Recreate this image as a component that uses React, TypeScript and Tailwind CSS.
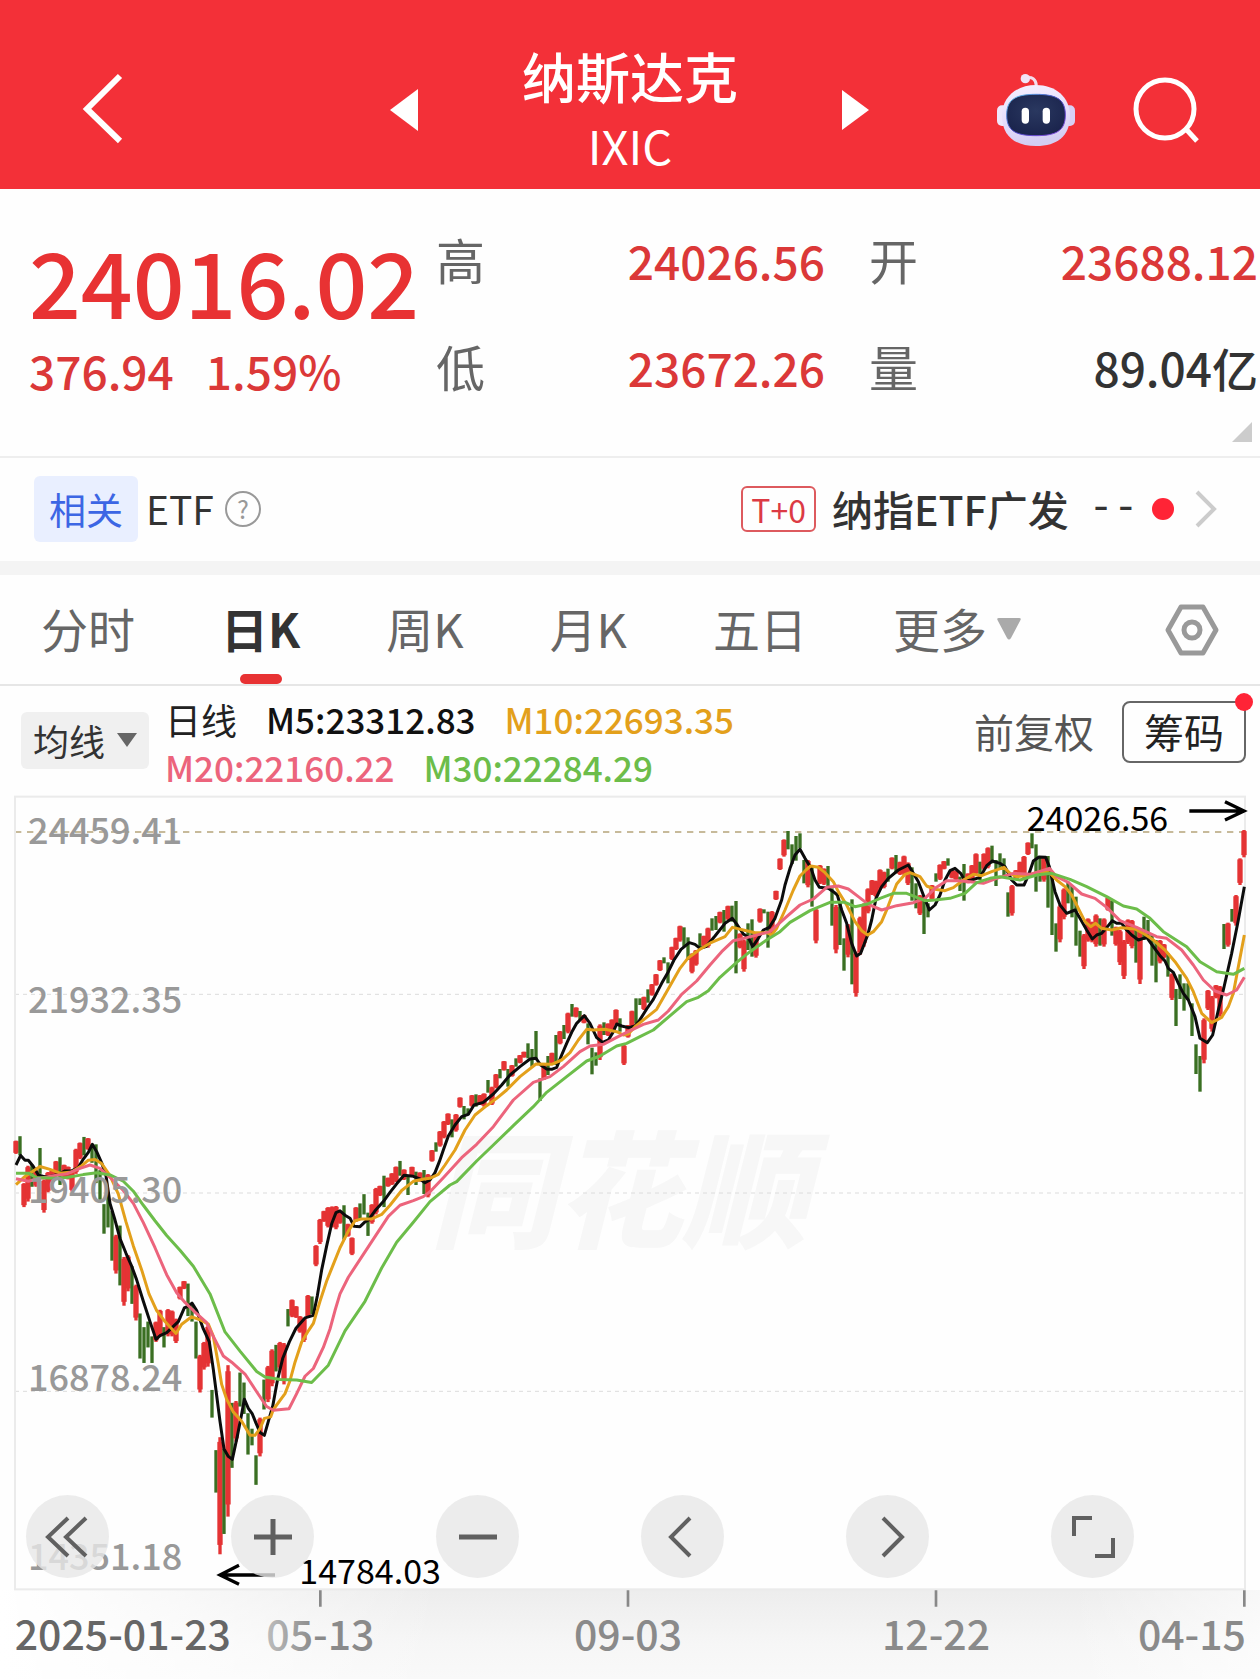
import type { ReactNode } from "react";

// Chart space: three units per CSS pixel at the base width of 1260.
const BAR_STEP = 12;
const FIRST_BAR_X = 48;

// Consecutive trading days, "r" rising or "g" falling, followed by high and low.
const SESSIONS: { y: number; scale: number; bars: string }[] = [
  {
    y: 960,
    scale: 1.108,
    bars: `r110-146 g98-150 r225-290 r178-275 g175-235 r190-235 g130-200 r215-305 r195-250 r190-225
r165-205 g155-230 r175-210 r180-215 r190-248 r132-200 r115-160 g100-150 r103-135 g120-170
g120-225 g190-270 g282-362 g250-345 g300-435 r365-470 g340-502 r425-557 r420-518 g450-552
r500-597 g578-700 g615-712 g600-670 g640-712 r600-655 r568-640 g615-670 r566-640 r570-640
r592-658 r505-540 r490-512 g497-585 g555-600 g600-700 r690-792 r655-730 r610-722 g785-860
g948-1063 r913-1230 g945-1175 r718-1128 g820-996 r815-925 g738-830 g765-850 g848-960 g890-935
g962-1042 r860-965 g757-838 r720-818 r675-775 g663-735 r655-730 r658-770 g566-613 r540-588
r558-590 r585-630 r590-655 r528-590 g532-580 r393-450 r322-390 r300-330 r290-345 r288-345
r287-350 r300-335 g285-378 r335-370 r372-420 r290-330 g280-325 g255-310 g305-368 r282-335
r238-310 r232-260 g205-290 r210-235 r198-230 r180-222 g165-205`,
  },
  {
    y: 360,
    scale: 1,
    bars: `r808-840 g830-885 r800-830 g815-855 r817-845 g810-882 r822-892 r750-785 g727-755 r693-740
r663-715 r640-675 g658-712 r642-695 r592-623 g618-658 g625-645 r585-620 g583-620 r585-615
r580-620 g540-578 r560-615 r522-565 g507-535 r483-512 g507-560 r495-530 g475-500 r465-490
r455-473 g430-475 g447-500 g393-480 g535-603 r490-540 g468-525 r458-495 g405-495 r393-433
g375-417 r338-400 g312-350 r322-352 g333-360 r345-370 g370-433 g443-523 g457-497 r373-480
g367-405 r370-408 r358-395 r328-375`,
  },
  {
    y: 0,
    scale: 1,
    bars: `g715-755 r795-855 r735-773 r692-740 g655-730 g655-675 r650-690 g628-668 r612-647 r582-617
r540-573 g532-550 g547-610 r500-540 r473-510 r437-485 g442-500 g472-540 r520-580 r510-557
g460-510 r467-500 r443-503 g415-452 g408-450 r395-430 g390-455 r377-420 g377-425 g363-580
r460-505 r480-575 g430-510 g418-530 r460-533 r385-428 g388-400 g395-503 r393-465 r332-360
r235-270 r178-230 g153-208 g193-252 g168-242 g160-205 g240-310 r240-322 g255-380 r385-490
r255-312 r265-315 g258-320 g325-437 r375-520 g365-495 g475-572 r432-532 g358-613 r515-650
r410-525 r370-500 r325-400 r300-345 r302-352 r268-330 r275-325 g266-305 r232-268 g225-280
r245-285 r227-285 r247-315 g262-362 g310-385 r345-405 g350-462 g370-412 r315-360 g280-305
r253-300 r243-268 g235-257 r270-295 r272-300 g290-333 g252-362 r280-310 r255-300 r220-285
g245-300 r220-270 r202-265 g197-250 g240-318 g220-265 g235-290 g337-410 r315-407 r270-300
r245-285 r228-295 r187-225 g160-205 g193-335 g230-305 r230-305 g228-383 g285-465 g430-515
r375-487 r325-418 g305-370 g318-412 g350-497 g452-530 r462-567 r415-485 r425-487 r403-500
g415-497 r415-500 r352-392 g363-467 r440-497 r450-555 r480-597 r418-492 r420-505 g440-548
r445-612 g410-480 g420-475 g465-557 g480-607 r480-550 r492-535 g520-590 r580-660 g627-738
g583-657 g610-692 g610-660 g670-768 g793-882 g828-935 r715-850 r630-690 r648-755 r615-655
r618-710 g432-507 r428-500 g387-425 r345-437 r235-315 r150-232`,
  },
];

// Offsets of the four stretches in which each average is recorded.
const STRETCHES = [
  { x: 0, y: 960, scale: 1.108 },
  { x: 600, y: 360, scale: 1 },
  { x: 1800, y: 0, scale: 1 },
  { x: 2760, y: 0, scale: 1 },
];

const AVERAGES: { color: string; parts: string[] }[] = [
  {
    color: "#0c0c0c",
    parts: [
      "48,176 62,150 75,163 85,163 100,180 115,203 130,207 150,207 180,200 195,192 215,192 235,183 250,160 265,142 277,120 290,140 305,170 318,205 330,280 345,325 360,375 378,415 395,450 410,487 430,545 450,600 468,648 480,638 500,630 520,613 535,600 553,563 565,558 576,550 590,570 610,620 628,655 640,730 650,800 660,870 672,945 685,965 697,973 712,910 725,850 733,810 745,835 757,850 768,875 780,900 793,908 805,870 818,830 832,760 848,700 868,655 888,618 915,590 940,583 952,530 965,460 980,395 995,335 1008,305 1020,300 1035,312 1050,320 1062,342 1080,343 1095,330 1105,325 1125,300 1150,275 1170,250 1190,227",
      "612,826 640,829 660,837 675,848 690,840 705,818 718,785 730,750 745,708 765,675 785,650 805,643 822,615 850,607 880,582 905,555 930,525 960,500 990,477 1008,475 1022,495 1040,507 1055,508 1070,502 1085,465 1100,430 1115,397 1130,370 1153,347 1170,370 1190,413 1208,427 1225,420 1240,395",
      "50,732 65,738 85,743 105,738 118,722 140,687 160,658 185,610 205,575 222,540 243,508 268,488 285,493 300,505 318,500 345,468 375,430 397,415 412,435 430,462 445,472 458,500 475,475 490,450 508,442 525,415 545,360 555,315 570,265 585,225 600,208 615,235 632,262 645,300 658,322 685,325 700,335 712,345 725,390 740,430 755,490 770,528 782,520 803,465 815,420 828,355 845,320 865,295 895,270 925,255 940,280 955,305 970,345",
      "28,390 45,375 60,345 75,300 90,272 105,265 122,280 135,303 155,300 180,292 200,257 217,243 240,250 255,260 275,300 290,315 312,315 325,287 340,243 357,231 377,232 388,260 405,335 420,375 440,400 465,390 480,415 500,450 517,477 530,465 545,460 560,443 577,422 590,430 605,430 620,450 635,465 655,480 680,472 700,500 720,527 735,543 745,565 760,577 775,610 790,640 805,660 825,710 840,775 862,788 878,765 895,690 910,630 935,520 955,420 973,320",
    ],
  },
  {
    color: "#e3a01b",
    parts: [
      "48,229 75,207 120,180 150,188 180,198 215,195 245,178 265,163 285,161 305,172 330,205 355,255 378,330 400,395 425,460 447,525 470,570 495,600 528,632 545,607 575,587 600,595 625,607 640,640 655,715 665,770 680,810 700,845 725,870 750,908 765,908 780,890 793,862 812,858 820,838 855,795 870,760 885,710 905,655 925,625 940,605 960,545 980,490 1000,445 1020,400 1045,355 1065,327 1085,322 1115,322 1145,310 1170,285 1205,245",
      "640,844 672,837 690,835 715,823 735,795 765,750 795,690 825,645 860,617 890,595 920,570 960,530 1008,492 1055,493 1085,480 1110,458 1135,420 1160,388 1180,390 1215,388",
      "50,755 70,765 85,762 105,740 140,712 170,688 200,635 240,565 265,533 300,508 335,487 375,470 397,442 430,450 465,458 500,458 515,465 530,445 555,390 580,330 600,288 618,270 632,258 655,262 675,278 700,305 715,335 740,375 765,425 785,452 803,465 820,455 845,425 862,385 875,350 890,312 915,283 930,278 960,290 980,318",
      "45,328 75,332 100,323 130,300 160,283 185,287 215,275 252,262 270,280 290,290 325,285 360,275 388,278 410,300 435,320 455,345 475,385 495,425 512,440 527,430 545,445 575,450 605,443 645,447 670,460 700,480 735,510 765,545 800,595 820,635 845,700 875,728 905,712 925,680 940,640 955,560 973,465",
    ],
  },
  {
    color: "#ec647c",
    parts: [
      "48,213 85,220 120,212 160,205 200,200 240,185 270,176 300,185 340,218 370,245 400,280 430,332 465,400 500,473 530,522 555,548 580,570 620,603 640,640 670,693 695,710 735,742 770,790 800,830 820,840 867,836 890,795 915,748 940,727 970,670 990,620 1005,570 1020,525 1045,480 1090,418 1125,370 1165,315 1200,285",
      "640,902 670,890 690,875 730,833 785,773 830,733 880,680 940,600 1000,547 1050,530 1090,500 1140,455 1170,438 1210,433",
      "50,772 80,757 130,733 175,720 205,693 245,643 290,603 330,555 365,515 400,482 440,473 510,455 560,410 600,375 640,357 680,322 715,318 745,327 775,350 805,373 845,390 890,377 940,368",
      "15,355 45,325 80,302 115,302 150,305 190,310 230,295 280,280 330,283 388,265 410,290 445,307 485,342 525,355 560,382 600,422 650,442 710,470 740,475 785,510 820,555 850,600 885,633 920,645 950,630 973,592",
    ],
  },
  {
    color: "#6cbd4a",
    parts: [
      "48,198 85,198 110,210 160,212 200,210 250,202 290,197 330,203 370,220 400,247 430,285 465,327 500,367 540,407 580,450 630,525 675,628 720,680 770,735 795,750 840,757 890,758 935,765 985,718 1035,625 1095,545 1145,455 1190,385",
      "640,967 690,905 750,855 770,845 830,783 880,735 940,677 1000,620 1040,577 1100,530 1160,483 1200,468",
      "50,798 80,790 120,770 160,750 215,703 260,665 295,652 325,632 360,592 410,547 450,515 500,480 540,455 570,427 630,392 690,367 735,367 765,380 800,373 840,355 880,340 920,340",
      "15,362 45,360 90,355 135,340 170,308 210,295 240,290 300,300 350,285 395,280 450,298 500,320 560,350 610,378 650,387 690,415 730,455 800,500 840,545 890,575 940,583 973,565",
    ],
  },
];

const bars = SESSIONS.flatMap(({ y, scale, bars: text }) =>
  text.split(/\s+/).map((entry) => {
    const [high, low] = entry.slice(1).split("-").map(Number);
    return { rising: entry[0] === "r", high: high * scale + y, low: low * scale + y };
  }),
);

const averageLines = AVERAGES.map(({ color, parts }) => ({
  color,
  points: parts
    .flatMap((part, i) =>
      part.split(" ").map((pair) => {
        const [x, y] = pair.split(",").map(Number);
        return `${x + STRETCHES[i].x},${y * STRETCHES[i].scale + STRETCHES[i].y}`;
      }),
    )
    .join(" "),
}));

const PRICE_LABELS = [
  { text: "24459.41", y: 192 },
  { text: "21932.35", y: 699 },
  { text: "19405.30", y: 1268 },
  { text: "16878.24", y: 1833 },
  { text: "14351.18", y: 2369 },
];

function Chart() {
  return (
    <svg viewBox="0 45 3780 2652" className="block w-full overflow-visible" role="img" aria-label="日K">
      <defs>
        <linearGradient id="axisShade" x1="0" y1="0" x2="0" y2="1">
          <stop offset="0" stopColor="#ededed" />
          <stop offset="0.6" stopColor="#f6f6f6" />
          <stop offset="1" stopColor="#f9f9f9" />
        </linearGradient>
        <linearGradient id="axisFade" x1="0" y1="0" x2="1" y2="0">
          <stop offset="0" stopColor="#fff" />
          <stop offset="0.12" stopColor="#fff" stopOpacity="0.7" />
          <stop offset="0.35" stopColor="#fff" stopOpacity="0" />
          <stop offset="0.85" stopColor="#fff" stopOpacity="0" />
          <stop offset="1" stopColor="#fff" stopOpacity="0.6" />
        </linearGradient>
        <linearGradient id="dateFade" x1="0" y1="0" x2="1" y2="0">
          <stop offset="0" stopColor="#bdbdbd" />
          <stop offset="0.45" stopColor="#8a8a8a" />
        </linearGradient>
      </defs>

      <rect x="0" y="2430" width="3780" height="267" fill="url(#axisShade)" />
      <rect x="0" y="2430" width="3780" height="267" fill="url(#axisFade)" />

      <text x="1290" y="1374" fontSize="378" fontWeight="900" fontStyle="italic" fill="#f7f7f7">
        同花顺
      </text>

      <g fill="none" stroke="#dcdcdc" strokeWidth="3" strokeDasharray="12 12">
        <path d="M45 643H3735M45 1239H3735M45 1834H3735" />
      </g>
      <path d="M45 156H3735" stroke="#b5a479" strokeWidth="5" strokeDasharray="19 17" />
      <rect x="45" y="50" width="3690" height="2378" fill="none" stroke="#ebebeb" strokeWidth="6" />

      {bars.map(({ rising, high, low }, i) => {
        const x = FIRST_BAR_X + i * BAR_STEP;
        const span = low - high;
        if (!rising) {
          return <rect key={i} x={x - 5} y={high} width="10" height={span} fill="#3a6f22" />;
        }
        return (
          <g key={i} fill="#e43334">
            <rect x={x - 5} y={high} width="10" height={span} />
            <rect x={x - 8} y={high + span * 0.04} width="16" height={span * 0.88} />
          </g>
        );
      })}

      {averageLines.map(({ color, points }) => (
        <polyline
          key={color}
          points={points}
          fill="none"
          stroke={color}
          strokeWidth="9"
          strokeLinejoin="round"
        />
      ))}

      <g fontSize="108" fontWeight="500" fill="#999999">
        {PRICE_LABELS.map(({ text, y }) => (
          <text key={text} x="84" y={y}>
            {text}
          </text>
        ))}
      </g>

      <g fill="none" stroke="#000" strokeWidth="10">
        <path d="M3568 93H3730M3675 65L3732 93L3675 120" />
        <path d="M825 2385H662M717 2356L660 2385L717 2413" />
      </g>
      <g fontSize="102" fill="#000">
        <text x="3080" y="152">24026.56</text>
        <text x="898" y="2411">14784.03</text>
      </g>

      <path d="M961 2431V2480M1884 2431V2480M2808 2431V2480M3733 2431V2480" stroke="#888" strokeWidth="8" />
      <g fontSize="123" fontWeight="500" fill="#8a8a8a">
        <text x="44" y="2610" fill="#666">
          2025-01-23
        </text>
        <text x="961" y="2610" textAnchor="middle" fill="url(#dateFade)">
          05-13
        </text>
        <text x="1884" y="2610" textAnchor="middle">
          09-03
        </text>
        <text x="2808" y="2610" textAnchor="middle">
          12-22
        </text>
        <text x="3738" y="2610" textAnchor="end">
          04-15
        </text>
      </g>
    </svg>
  );
}

function Robot() {
  return (
    <svg viewBox="0 0 240 222" className="w-20" aria-hidden="true">
      <defs>
        <linearGradient id="shell" x1="0" y1="0" x2="0.2" y2="1">
          <stop offset="0" stopColor="#f6f0ff" />
          <stop offset="0.6" stopColor="#e6ddfb" />
          <stop offset="1" stopColor="#d3cdf2" />
        </linearGradient>
        <linearGradient id="visorEdge" x1="0" y1="0" x2="1" y2="1">
          <stop offset="0" stopColor="#62c8e8" />
          <stop offset="0.5" stopColor="#4b49c9" />
          <stop offset="1" stopColor="#8a4be0" />
        </linearGradient>
        <radialGradient id="visor" cx="0.5" cy="0.4" r="0.7">
          <stop offset="0" stopColor="#2a3860" />
          <stop offset="1" stopColor="#18214a" />
        </radialGradient>
      </defs>
      <path d="M88 15C108 10 120 18 121 38" fill="none" stroke="#f3dcec" strokeWidth="9" />
      <circle cx="88" cy="17" r="14" fill="#f1e4f7" />
      <rect x="3" y="97" width="34" height="62" rx="15" fill="#efe6fb" />
      <rect x="203" y="97" width="34" height="62" rx="15" fill="#d8cff5" />
      <path
        d="M120 36C178 36 222 72 222 128C222 188 184 219 120 219C56 219 18 188 18 128C18 72 62 36 120 36Z"
        fill="url(#shell)"
      />
      <path
        d="M120 64C180 64 208 78 208 126C208 174 180 188 120 188C60 188 32 174 32 126C32 78 60 64 120 64Z"
        fill="url(#visor)"
        stroke="url(#visorEdge)"
        strokeWidth="3"
      />
      <rect x="77" y="104" width="22" height="48" rx="11" fill="#fff" />
      <rect x="140" y="104" width="22" height="48" rx="11" fill="#fff" />
    </svg>
  );
}

function Header() {
  return (
    <header className="flex h-[189px] items-center bg-[#f33038] px-[60px] pt-[30px] text-white">
      <div className="flex flex-1 items-center pb-1">
        <button aria-label="返回" className="ml-5">
          <svg viewBox="0 0 44 72" className="h-[72px] w-11" fill="none" stroke="#fff" strokeWidth="6">
            <path d="M40 4L7 37L40 69" />
          </svg>
        </button>
      </div>
      <div className="flex w-[480px] items-center justify-between">
        <button aria-label="上一个">
          <svg viewBox="0 0 28 42" className="h-[42px] w-7" fill="#fff">
            <path d="M28 0V42L0 21Z" />
          </svg>
        </button>
        <h1 className="text-center text-[54px] leading-[70px] font-medium">
          纳斯达克
          <span className="block text-[47px] leading-[68px] font-normal">IXIC</span>
        </h1>
        <button aria-label="下一个">
          <svg viewBox="0 0 28 42" className="h-[42px] w-7" fill="#fff">
            <path d="M0 1V41L27 21Z" />
          </svg>
        </button>
      </div>
      <div className="flex flex-1 items-center justify-end gap-14">
        <button aria-label="智能助手">
          <Robot />
        </button>
        <button aria-label="搜索">
          <svg viewBox="0 0 68 68" className="size-[68px]" fill="none" stroke="#fff" strokeWidth="5">
            <circle cx="33" cy="33" r="29" />
            <path d="M54 53L65 65" />
          </svg>
        </button>
      </div>
    </header>
  );
}

function Stat({ label, value, tone }: { label: string; value: string; tone: string }) {
  return (
    <div className="flex items-center justify-between">
      <dt className="pb-1 text-[49px] leading-[103px] text-[#666]">{label}</dt>
      <dd className={`text-[46px] font-medium ${tone}`}>{value}</dd>
    </div>
  );
}

function Quote() {
  return (
    <section className="relative flex h-[269px] border-b-2 border-[#eee] pt-[18px] pr-[2px] pl-[29px] leading-[107px]">
      <div className="w-[407px] shrink-0 pt-[14px] text-[#e83233]">
        <p className="text-[91px] leading-[116px] font-medium">24016.02</p>
        <p className="flex gap-8 text-[46px] leading-[66px] font-medium text-[#db3838]">
          <span>376.94</span>
          <span>1.59%</span>
        </p>
      </div>
      <dl className="grid flex-1 grid-cols-2 content-start gap-x-11">
        <Stat label="高" value="24026.56" tone="text-[#db3838]" />
        <Stat label="开" value="23688.12" tone="text-[#db3838]" />
        <Stat label="低" value="23672.26" tone="text-[#db3838]" />
        <Stat label="量" value="89.04亿" tone="text-[#333]" />
      </dl>
      <svg viewBox="0 0 20 20" className="absolute right-2 bottom-[14px] size-5" fill="#ccc" aria-hidden="true">
        <path d="M20 0V20H0Z" />
      </svg>
    </section>
  );
}

function RelatedFund() {
  return (
    <section className="flex h-[103px] items-center pr-[42px] pb-[2px] pl-[34px] text-[#333]">
      <span className="rounded-md bg-[#e9efff] px-[15px] text-[37px] leading-[66px] text-[#3c66e4]">相关</span>
      <span className="ml-2 text-[39px]">ETF</span>
      <button
        aria-label="说明"
        className="ml-[11px] flex size-9 items-center justify-center rounded-full border-2 border-[#999] text-[25px] text-[#999]"
      >
        ?
      </button>
      <a href="#fund" className="ml-auto flex items-center text-[41px] font-medium">
        <span className="mr-4 rounded-md border-2 border-[#dd5a5e] px-2 text-[32px] leading-[42px] font-normal text-[#dc3a44]">
          T+0
        </span>
        纳指ETF广发
        <span className="ml-5 font-['Liberation_Mono',monospace]">--</span>
        <span className="ml-[14px] size-[22px] rounded-full bg-[#ff2436]" />
        <svg viewBox="0 0 24 40" className="ml-5 h-10 w-6" fill="none" stroke="#ccc" strokeWidth="4">
          <path d="M3 3L20 20L3 37" />
        </svg>
      </a>
    </section>
  );
}

function Tabs() {
  const tabs = ["分时", "日K", "周K", "月K", "五日"];
  return (
    <nav className="flex h-[125px] items-center justify-between border-t-[14px] border-b-2 border-t-[#f4f4f4] border-b-[#e6e6e6] pr-[41px] pl-[41px] text-[47px] text-[#666]">
      <div className="flex h-full items-center gap-[86px]">
        {tabs.map((tab) =>
          tab === "日K" ? (
            <button key={tab} className="relative h-full pb-[2px] font-bold text-[#333]">
              {tab}
              <span className="absolute bottom-0 left-1/2 h-[10px] w-[42px] -translate-x-1/2 rounded-full bg-[#e83233]" />
            </button>
          ) : (
            <button key={tab} className="pb-[2px]">
              {tab}
            </button>
          ),
        )}
        <button className="flex items-center gap-[10px] pb-[2px]">
          更多
          <svg viewBox="0 0 24 22" className="h-[22px] w-6" fill="#aaa">
            <path d="M2 0H22Q25 0 23 3L14 20Q12 23 10 20L1 3Q-1 0 2 0Z" />
          </svg>
        </button>
      </div>
      <button aria-label="设置">
        <svg
          viewBox="0 0 54 52"
          className="h-[52px] w-[54px]"
          fill="none"
          stroke="#999"
          strokeWidth="5"
          strokeLinejoin="round"
        >
          <path d="M16 3H38L51 26L38 49H16L3 26Z" />
          <circle cx="27" cy="26" r="8" />
        </svg>
      </button>
    </nav>
  );
}

function Indicators() {
  return (
    <section className="flex h-[109px] items-start pr-[14px] pl-[21px]">
      <button className="mt-[26px] flex h-[57px] items-center gap-3 rounded-md bg-[#f0f0f0] px-3 pb-[2px] text-[36px] text-[#333]">
        均线
        <svg viewBox="0 0 20 14" className="h-[14px] w-5" fill="#666">
          <path d="M0 0H20L10 14Z" />
        </svg>
      </button>
      <div className="mt-[9px] ml-4 text-[35px] leading-[48px] font-medium">
        <p className="flex gap-[29px]">
          <span className="text-[36px] font-normal text-[#222]">日线</span>
          <span className="text-[#111]">M5:23312.83</span>
          <span className="text-[#e3a01b]">M10:22693.35</span>
        </p>
        <p className="flex gap-[29px]">
          <span className="text-[#ec647c]">M20:22160.22</span>
          <span className="text-[#6cbd4a]">M30:22284.29</span>
        </p>
      </div>
      <div className="mt-[15px] ml-auto flex items-center gap-7 text-[40px]">
        <button className="pb-[2px] leading-[56px] text-[#555]">前复权</button>
        <button className="relative rounded-lg border-2 border-[#666] px-5 pb-[2px] leading-[56px] text-[#222]">
          筹码
          <span className="absolute -top-[10px] -right-[9px] size-[18px] rounded-full bg-[#ff2436]" />
        </button>
      </div>
    </section>
  );
}

function RoundButton({ label, children }: { label: string; children: ReactNode }) {
  return (
    <button
      aria-label={label}
      className="flex size-[83px] items-center justify-center rounded-full bg-[#e7e7e7]/80"
    >
      <svg viewBox="0 0 48 48" className="size-12" fill="none" stroke="#606060" strokeWidth="4">
        {children}
      </svg>
    </button>
  );
}

function Controls() {
  return (
    <div className="absolute right-[126px] bottom-[101px] left-[26px] flex justify-between">
      <RoundButton label="展开">
        <path d="M24 5L4 24L24 43M42 5L22 24L42 43" />
      </RoundButton>
      <RoundButton label="放大">
        <path d="M5 24H43M24 6V42" strokeWidth="5" />
      </RoundButton>
      <RoundButton label="缩小">
        <path d="M5 24H43" strokeWidth="5" />
      </RoundButton>
      <RoundButton label="向左">
        <path d="M31 5L12 24L31 43" />
      </RoundButton>
      <RoundButton label="向右">
        <path d="M19 5L38 24L19 43" />
      </RoundButton>
      <RoundButton label="全屏">
        <path d="M5 23V5H23M44 25V43H26" />
      </RoundButton>
    </div>
  );
}

export default function App() {
  return (
    <main className="overflow-x-clip bg-[#fefefe] font-['Noto_Sans_CJK_SC',sans-serif]">
      <Header />
      <Quote />
      <RelatedFund />
      <Tabs />
      <Indicators />
      <section className="relative">
        <Chart />
        <Controls />
      </section>
    </main>
  );
}
